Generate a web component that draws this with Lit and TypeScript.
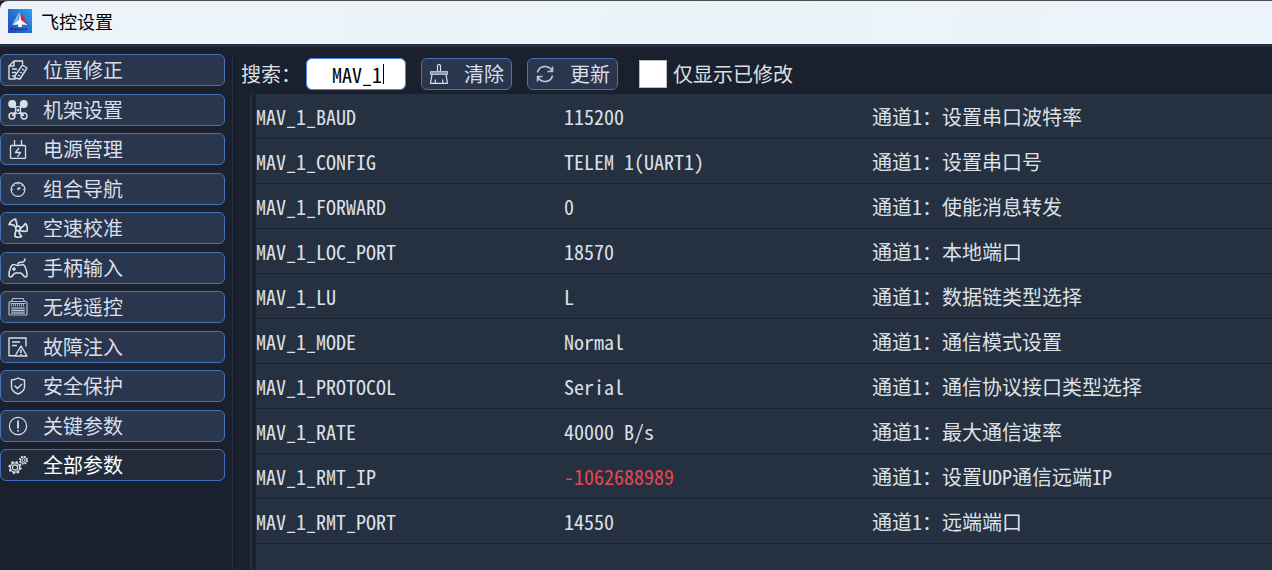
import { LitElement, html, svg, css, TemplateResult } from "lit";
import { customElement, state } from "lit/decorators.js";
import { classMap } from "lit/directives/class-map.js";

type Param = { name: string; value: string; note: string; modified?: boolean };

const ICONS: Record<string, TemplateResult> = {
  position: svg`<g stroke-width="1.400"><path d="M14.500 4V1H6L1 6v13h6.500M6 1v5H1M4 9h5M4 12.500h4M4 16h3"/><path d="M14.500 5l4.500 3-7 11-5.500-1 1-3zM12 12l2 1.200M14 9l2 1.200M10 15l2 1.200"/></g>`,
  frame: svg`<g fill="currentColor"><circle cx="4.200" cy="4" r="3.400"/><circle cx="15.800" cy="4" r="3.400"/></g><g stroke-width="1.400"><circle cx="4" cy="16" r="3"/><circle cx="16" cy="16" r="3"/></g><path stroke-width="2.200" d="M4 4l4 4M16 4l-4 4M4.500 16L8 12M15.500 16L12 12"/><rect x="7.500" y="6.500" width="5" height="7" rx="2"/><circle cx="10" cy="10" r="1"/>`,
  power: svg`<path stroke-width="1.300" d="M3.500 6.500h13q1 0 1 1v11q0 1-1 1h-13q-1 0-1-1v-11q0-1 1-1zM6.500 1v5.500M13.500 1v5.500M11 9L7.500 13.500h5L9.500 18"/>`,
  nav: svg`<circle cx="10" cy="10.500" r="6.900"/><path stroke-width="2" d="M12 8.500L9.500 10.500"/><path d="M10 4v1.500M3.500 10.500h1.500M16.500 10.500h-1.500M5.500 6l1 1M14.500 6l-1 1"/>`,
  airspeed: svg`<g stroke-width="1.700"><circle cx="10" cy="10.500" r="2.300"/><path d="M9 8.200Q8.800 5 7.500 1Q3 2 1 6.500Q5 5.500 8 9.200M12.300 10.500Q15 9 17.500 5.500Q20 8.500 19 13Q15.500 14 11.800 12.200M8.200 12.200Q6.800 15 7 18.500Q10 20 13.500 18.500Q11 16 11 12.800"/></g>`,
  gamepad: svg`<path stroke-width="1.500" d="M5.500 6.500C3 6.500 1 13 1 17c0 3 2.500 2.500 4 0 1-1.700 1.500-2 3-2h4c1.500 0 2 .3 3 2 1.500 2.500 4 3 4 0 0-4-2-10.500-4.500-10.500-1.500 0-2 1-4.500 1s-3-1-4.500-1zM10 7.500c-1-3.500 1.500-3 4-3.200C16.500 4 17 2.500 17 .5M4 11h4M6 9v4"/><path stroke-width="1.800" d="M13 9.500v.1M15.500 10.500v.1M12.500 12v.1M15 13v.1"/>`,
  radio: svg`<path fill="currentColor" fill-opacity=".3" d="M3 10.500h14v6.500H3z" stroke="none"/><g stroke-opacity=".8"><path d="M3.500 4.500L5 1.500h10l1.500 3M1 6q0-1.500 1.500-1.500h15q1.500 0 1.500 1.500v11q0 1-1 1H2q-1 0-1-1zM2.500 6.500h15"/><path stroke-width="2" stroke-dasharray="1 1" d="M3 8.300h14"/><path d="M3.500 11h13M3.500 13.500h13M3.500 16h13"/></g>`,
  fault: svg`<path stroke-width="1.400" d="M7 18.800H1V1h17v8.500M4 5h8M4 8.500h5"/><path stroke-width="1.400" d="M13 9l6 10H7z"/><path stroke-width="1.600" d="M13 12.500v3.500M13 17v1"/>`,
  shield: svg`<path stroke-width="1.400" d="M10 2q3 1.800 6.500 2v7q0 4.500-6.500 7-6.500-2.500-6.500-7V4Q7 3.800 10 2zM6.500 9.500l3 3 4.500-4.500"/>`,
  key: svg`<circle cx="10" cy="10" r="8.600"/><path stroke-width="1.800" d="M10 4.500v8M10 14v1.600"/>`,
  all: svg`<g stroke-opacity=".85"><circle cx="7" cy="12.500" r="5.800" stroke-width="1.700" stroke-dasharray="2.200 2.350"/><circle cx="7" cy="12.500" r="4.700"/><circle cx="7" cy="12.500" r="2.600"/><circle cx="15.500" cy="5.200" r="3.900" stroke-width="1.400" stroke-dasharray="1.600 1.460"/><circle cx="15.500" cy="5.200" r="3.100" stroke-width="1"/><circle cx="15.500" cy="5.200" r="1.400" stroke-width="1"/></g>`,
  clear: svg`<path d="M8.500 7V2q0-1.500 1.500-1.500T11.500 2v5"/><path fill="currentColor" fill-opacity=".6" stroke-opacity=".7" d="M1.500 7.500h17v3h-17z"/><path d="M3 10.500L1.500 19.300h17L17 10.500M6.500 15.500l-.5 3.500M13.500 15.500l.5 3.500"/>`,
  refresh: svg`<path stroke-width="1.600" stroke-opacity=".85" d="M2.500 8.500C4 1.500 13 .5 17 6.500M17.500 2.500v5h-5M17.500 11.500C16 18.500 7 19.500 3 13.500M2.500 17.500v-5h5"/>`,
};

const icon = (name: string) => html`<svg class="icon" viewBox="0 0 20 20" aria-hidden="true">${ICONS[name]}</svg>`;

const MENU = [
  ["position", "位置修正"],
  ["frame", "机架设置"],
  ["power", "电源管理"],
  ["nav", "组合导航"],
  ["airspeed", "空速校准"],
  ["gamepad", "手柄输入"],
  ["radio", "无线遥控"],
  ["fault", "故障注入"],
  ["shield", "安全保护"],
  ["key", "关键参数"],
  ["all", "全部参数"],
];

const PARAMS: Param[] = [
  { name: "MAV_1_BAUD", value: "115200", note: "通道1：设置串口波特率" },
  { name: "MAV_1_CONFIG", value: "TELEM 1(UART1)", note: "通道1：设置串口号" },
  { name: "MAV_1_FORWARD", value: "0", note: "通道1：使能消息转发" },
  { name: "MAV_1_LOC_PORT", value: "18570", note: "通道1：本地端口" },
  { name: "MAV_1_LU", value: "L", note: "通道1：数据链类型选择" },
  { name: "MAV_1_MODE", value: "Normal", note: "通道1：通信模式设置" },
  { name: "MAV_1_PROTOCOL", value: "Serial", note: "通道1：通信协议接口类型选择" },
  { name: "MAV_1_RATE", value: "40000 B/s", note: "通道1：最大通信速率" },
  { name: "MAV_1_RMT_IP", value: "-1062688989", note: "通道1：设置UDP通信远端IP", modified: true },
  { name: "MAV_1_RMT_PORT", value: "14550", note: "通道1：远端端口" },
];

@customElement("app-root")
export class AppRoot extends LitElement {
  @state() private query = "MAV_1";
  @state() private onlyModified = false;
  @state() private active = "all";

  static styles = css`
    :host {
      display: flex;
      flex-direction: column;
      box-sizing: border-box;
      min-height: 100vh;
      border-top: 1px solid #4d4a50;
      background: #1a202d;
      color: #dde1e6;
      font: 20px/28px "Noto Sans Mono CJK SC", "Noto Sans CJK SC", sans-serif;
    }
    * { box-sizing: border-box; }
    .titlebar {
      display: flex;
      align-items: center;
      gap: 9px;
      height: 46px;
      padding: 0 8px 3px;
      border-bottom: 3px solid #253040;
      border-top-left-radius: 8px;
      background: linear-gradient(100deg, #edf3fa, #eaf4f8 60%, #edf3fb);
      color: #000;
    }
    .title { margin: 0; font: 18px/24px "Noto Sans CJK SC", sans-serif; }
    .logo { width: 24px; height: 24px; }
    .body { flex: 1; display: flex; padding-top: 7px; }
    .side { flex: none; width: 233px; padding-right: 7px; border-right: 1px solid #253040; }
    .menu {
      display: flex;
      flex-direction: column;
      justify-content: space-between;
      height: 75vh;
      min-height: 400px;
      margin: 0;
      padding: 0;
      list-style: none;
    }
    .btn {
      display: flex;
      align-items: center;
      height: 32px;
      padding: 0 7px;
      border: 1px solid #4674b3;
      border-radius: 6px;
      background: #29364e;
      color: #d8dfe9;
      font: inherit;
      white-space: nowrap;
      cursor: pointer;
    }
    .item { width: 100%; gap: 15px; }
    .item.active { border-color: #426fbd; background: #212b3a; color: #fff; }
    .icon {
      flex: none;
      width: 20px;
      height: 20px;
      fill: none;
      stroke: currentColor;
      stroke-width: 1.200;
      stroke-linejoin: round;
    }
    .main { flex: 1; display: flex; flex-direction: column; min-width: 0; }
    .tools { display: flex; align-items: center; gap: 15px; height: 40px; padding-left: 8px; }
    .search { display: flex; align-items: center; gap: 5px; }
    .field { position: relative; width: 100px; }
    .input {
      display: block;
      width: 100%;
      height: 32px;
      padding: 0 0 0 2px;
      border: 1px solid #4b87e0;
      border-radius: 6px;
      outline: none;
      background: #fff;
      color: #000;
      caret-color: transparent;
      font: inherit;
      text-align: center;
    }
    .caret { position: absolute; top: 6px; left: calc(50% + 27px); width: 1px; height: 20px; background: #000; }
    .tool { gap: 15px; }
    .check { display: flex; align-items: center; gap: 6px; margin-left: 6px; }
    .box { appearance: none; width: 28px; height: 28px; margin: 0; border: 1px solid #b8bcc0; background: #fff; }
    .box:checked { background: #4674b3; }
    .panel { flex: 1; margin-left: 17px; padding-left: 4px; border-left: 2px solid #253040; }
    .sheet { height: 100%; background: #253040; }
    .table { width: 100%; border-collapse: separate; border-spacing: 0; table-layout: fixed; }
    .col { width: 308px; }
    .cell { height: 45px; padding: 2px 0 0; border-bottom: 1px solid #1a202d; text-align: left; font-weight: 400; white-space: nowrap; }
    .modified { color: #e5484d; }
  `;

  render() {
    const rows = PARAMS.filter(
      (p) => p.name.includes(this.query.toUpperCase()) && (!this.onlyModified || p.modified)
    );
    return html`
      <header class="titlebar">
        <svg class="logo" viewBox="0 0 24 24" aria-hidden="true">
          <defs><linearGradient id="sky" x1="0" y1="1" x2="1" y2="0"><stop stop-color="#2442bd" /><stop offset="1" stop-color="#2aa2ed" /></linearGradient></defs>
          <path fill="url(#sky)" d="M0 0h24v24H0z" />
          <path fill="#7cc4f5" d="M11.500 2.500L4 16l6-4z" />
          <path fill="#dc2435" d="M12.500 2.500L20 16l-6-4-1.500-3z" />
          <path fill="#fff" d="M12 3l1 8 6.500 5-6-.5.5 2.500h-4l.5-2.500-6 .5L11 11z" />
          <path fill="none" stroke="#152665" stroke-width="1.500" stroke-dasharray="2 1.500" d="M3 19.500l4 1h9l4-1" />
        </svg>
        <h1 class="title">飞控设置</h1>
      </header>
      <div class="body">
        <nav class="side">
          <ul class="menu">
            ${MENU.map(
              ([id, label]) => html`<li>
                <button class=${classMap({ btn: true, item: true, active: id === this.active })} @click=${() => (this.active = id)}>
                  ${icon(id)}<span>${label}</span>
                </button>
              </li>`
            )}
          </ul>
        </nav>
        <main class="main">
          <div class="tools">
            <div class="search">
              <label for="query">搜索：</label>
              <div class="field">
                <input id="query" class="input" type="text" .value=${this.query}
                  @input=${(e: Event) => (this.query = (e.target as HTMLInputElement).value)} />
                <span class="caret"></span>
              </div>
            </div>
            <button class="btn tool" @click=${() => (this.query = "")}>${icon("clear")}<span>清除</span></button>
            <button class="btn tool">${icon("refresh")}<span>更新</span></button>
            <div class="check">
              <input id="modified" class="box" type="checkbox" .checked=${this.onlyModified}
                @change=${(e: Event) => (this.onlyModified = (e.target as HTMLInputElement).checked)} />
              <label for="modified">仅显示已修改</label>
            </div>
          </div>
          <div class="panel">
            <div class="sheet">
              <table class="table">
                <colgroup><col class="col" /><col class="col" /><col /></colgroup>
                <tbody>
                  ${rows.map(
                    (p) => html`<tr>
                      <th class="cell" scope="row">${p.name}</th>
                      <td class=${classMap({ cell: true, modified: !!p.modified })}>${p.value}</td>
                      <td class="cell">${p.note}</td>
                    </tr>`
                  )}
                </tbody>
              </table>
            </div>
          </div>
        </main>
      </div>
    `;
  }
}
